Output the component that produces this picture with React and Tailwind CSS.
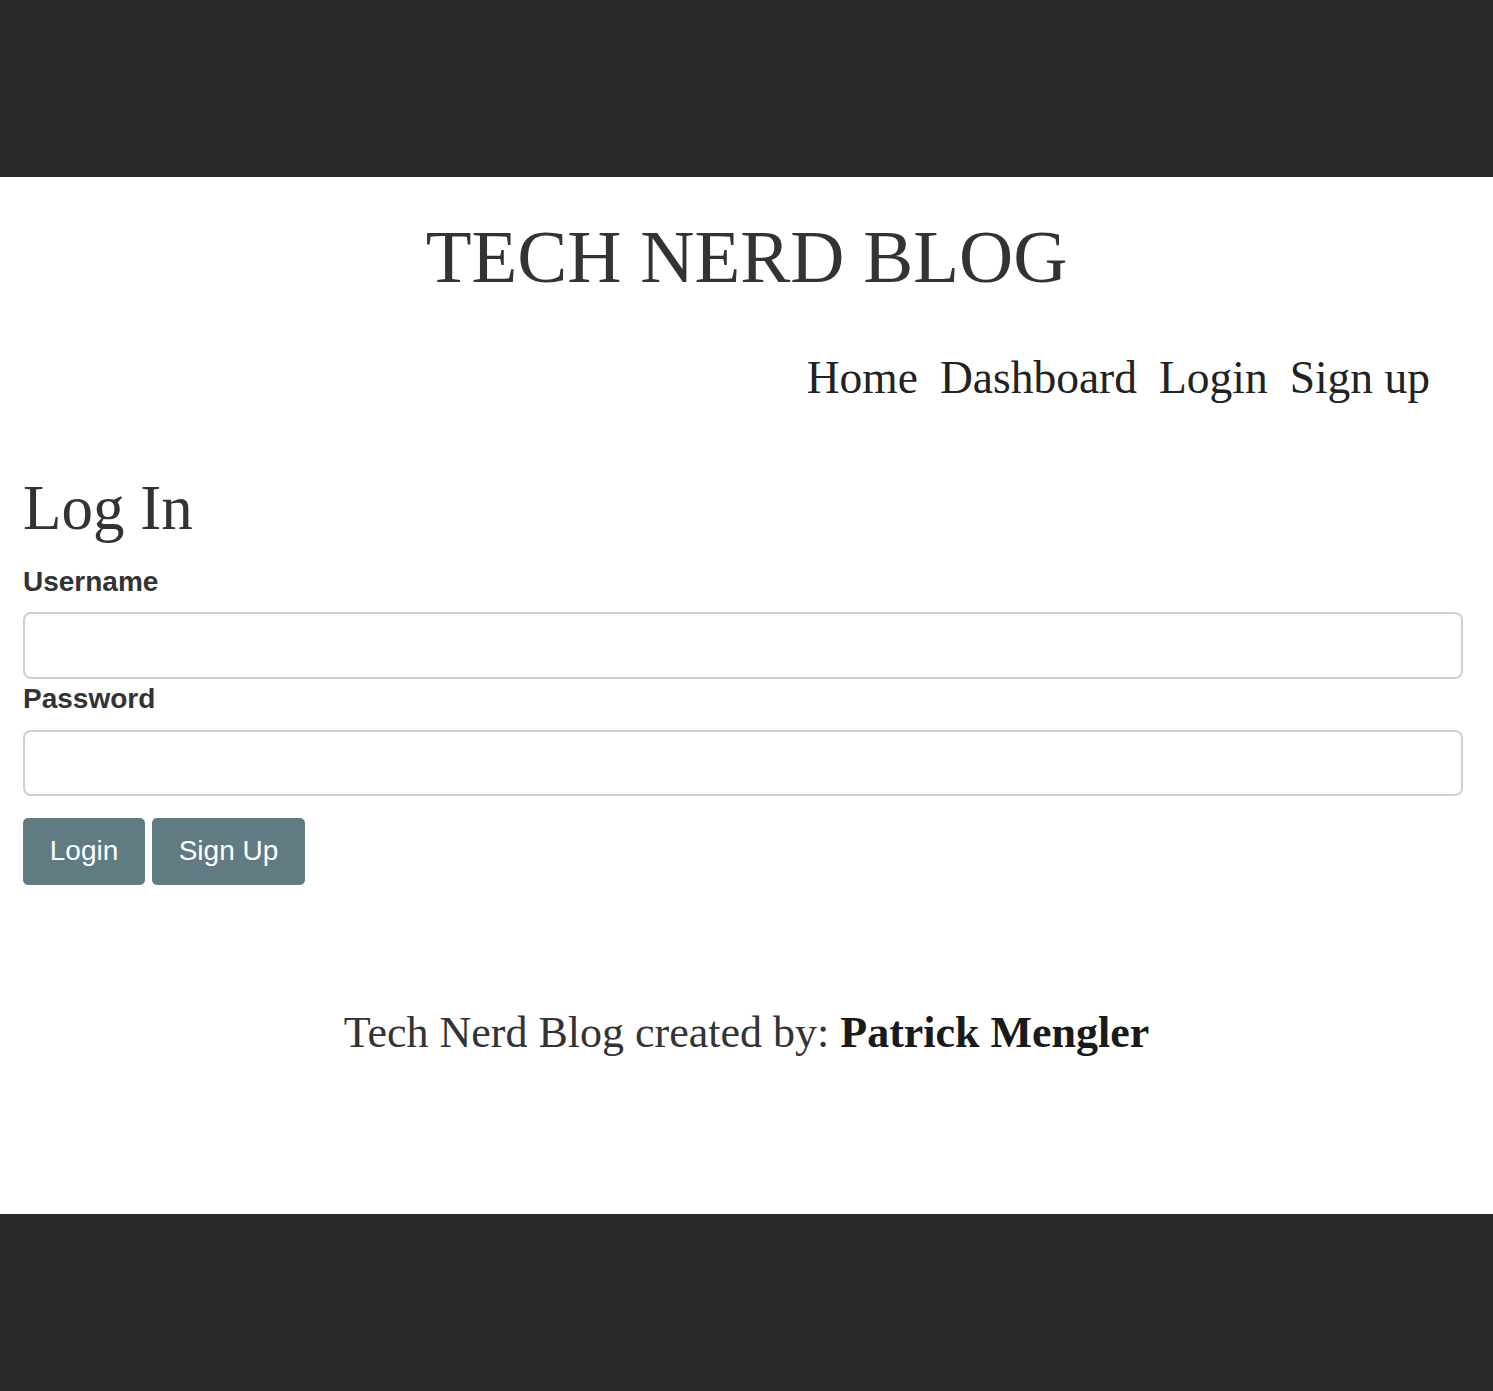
import React from 'react';

const serif = { fontFamily: '"Liberation Serif", "Times New Roman", serif' };

export default function App() {
  return (
    <div className="min-h-screen bg-white" style={serif}>
      <div className="h-[177px] bg-[#282828]" />

      <main className="bg-white pb-[159px]">
        <header>
          <h1 className="mt-[42px] text-center text-[75px] leading-none text-[#333333]">
            TECH NERD BLOG
          </h1>
          <nav className="mt-[61px] flex justify-end gap-[22px] pr-[63px] text-[45.5px] leading-none text-[#222222]">
            <a href="#">Home</a>
            <a href="#">Dashboard</a>
            <a href="#">Login</a>
            <a href="#">Sign up</a>
          </nav>
        </header>

        <section className="pl-[23px] pr-[30px]">
          <h2 className="mt-[76px] text-[63px] leading-none text-[#333333]">Log In</h2>
          <form className="flex flex-col [font-family:'Liberation_Sans',Arial,sans-serif]">
            <label className="mt-[28px] text-[28px] font-bold leading-none text-[#333333]">Username</label>
            <input type="text" className="mt-[16px] h-[67px] w-full rounded-[8px] border-2 border-[#d0d0d0] bg-white px-3 outline-none" />
            <label className="mt-[6px] text-[28px] font-bold leading-none text-[#333333]">Password</label>
            <input type="password" className="mt-[17px] h-[66px] w-full rounded-[8px] border-2 border-[#d0d0d0] bg-white px-3 outline-none" />
            <div className="mt-[22px] flex gap-[7px]">
              <button type="button" className="h-[67px] w-[122px] rounded-[5px] bg-[#607b82] text-[28px] text-white">Login</button>
              <button type="button" className="h-[67px] w-[153px] rounded-[5px] bg-[#607b82] text-[28px] text-white">Sign Up</button>
            </div>
          </form>
        </section>

        <footer className="mt-[126px] text-center text-[44px] leading-none text-[#333333]">
          Tech Nerd Blog created by: <strong className="font-bold text-[#1a1a1a]">Patrick Mengler</strong>
        </footer>
      </main>

      <div className="h-[177px] bg-[#282828]" />
    </div>
  );
}
